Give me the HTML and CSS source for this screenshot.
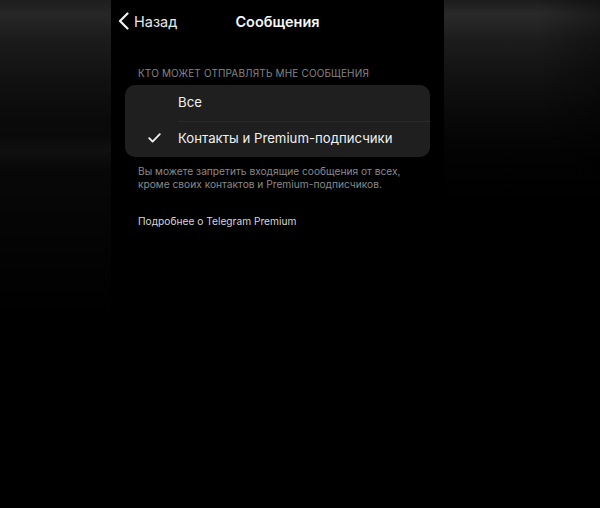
FILE: index.html
```html
<!DOCTYPE html>
<html lang="ru">
<head>
    <meta charset="UTF-8">
    <meta name="viewport" content="width=device-width, initial-scale=1.0">
    <title>Сообщения</title>
    <link rel="stylesheet" href="styles.css">
</head>
<body>

<div class="frame">
    <div class="side side-left"></div>

    <div class="screen">
        <div class="navbar">
            <a class="back" href="#">
                <svg width="11" height="18" viewBox="0 0 11 18">
                    <polyline points="9.5,1.5 2,9 9.5,16.5" fill="none" stroke="#f2f2f2" stroke-width="2.2" stroke-linecap="round" stroke-linejoin="round"/>
                </svg>
                <span>Назад</span>
            </a>
            <h1 class="title">Сообщения</h1>
        </div>

        <p class="section-title">Кто может отправлять мне сообщения</p>

        <ul class="options">
            <li class="option">
                <span class="check"></span>
                <span class="label">Все</span>
            </li>
            <li class="option selected">
                <span class="check">
                    <svg width="13" height="10" viewBox="0 0 13 10">
                        <polyline points="1.2,5.2 4.6,8.6 11.8,1.2" fill="none" stroke="#f2f2f2" stroke-width="1.8" stroke-linecap="round" stroke-linejoin="round"/>
                    </svg>
                </span>
                <span class="label">Контакты и Premium-подписчики</span>
            </li>
        </ul>

        <p class="footnote">Вы можете запретить входящие сообщения от всех, кроме своих контактов и Premium-подписчиков.</p>

        <a class="more" href="#">Подробнее о Telegram Premium</a>
    </div>

    <div class="side side-right"></div>
</div>

</body>
</html>
```

FILE: styles.css
```css
body {
    margin: 0;
    padding: 0;
    background-color: #000;
    color: #f0f0f0;
    font-family: Inter, "Noto Sans", sans-serif;
}

.frame {
    display: flex;
    width: 600px;
    height: 508px;
    overflow: hidden;
}

/* blurred edges around the phone screen */
.side {
    flex-shrink: 0;
    height: 100%;
}

.side-left {
    width: 111px;
    background:
        linear-gradient(to bottom, rgba(255,255,255,0) 135px, rgba(255,255,255,0.03) 150px, rgba(255,255,255,0) 170px),
        linear-gradient(to bottom, #1d1d1d 0, #272727 14px, #1b1b1b 40px, #111 80px, #0a0a0a 120px, #060606 200px, #000 320px);
}

.side-right {
    width: 156px;
    background:
        linear-gradient(to right, rgba(0,0,0,0) 0, rgba(0,0,0,0) 60%, rgba(0,0,0,0.35) 100%),
        linear-gradient(to bottom, #1c1c1c 0, #2a2a2a 14px, #1c1c1c 40px, #121212 75px, #0a0a0a 110px, #030303 150px, #000 200px);
}

.screen {
    width: 333px;
    flex-shrink: 0;
    background-color: #000;
    padding: 0 14px;
    box-sizing: border-box;
}

.navbar {
    position: relative;
    height: 42px;
    display: flex;
    align-items: center;
    justify-content: center;
}

.back {
    position: absolute;
    left: -7px;
    top: 12px;
    display: flex;
    align-items: center;
    gap: 5px;
    color: #e8e8e8;
    text-decoration: none;
    font-size: 14.5px;
}

.title {
    margin: 0;
    font-size: 14.5px;
    font-weight: 600;
    color: #f5f5f5;
}

.section-title {
    margin: 25px 0 6px 13px;
    font-size: 10px;
    line-height: 12px;
    text-transform: uppercase;
    letter-spacing: 0.15px;
    color: #858585;
}

.options {
    list-style: none;
    margin: 0;
    padding: 0;
    background-color: #1f1f1f;
    border-radius: 10px;
}

.option {
    display: flex;
    align-items: center;
    height: 36px;
    font-size: 13.2px;
    color: #f0f0f0;
}

.check {
    width: 53px;
    display: flex;
    justify-content: center;
    padding-left: 6px;
    box-sizing: border-box;
}

.label {
    flex: 1;
    height: 100%;
    display: flex;
    align-items: center;
    padding-bottom: 2px;
    box-sizing: border-box;
}

.option + .option .label {
    border-top: 1px solid #2a2a2a;
    padding-bottom: 3px;
}

.option + .option .check {
    padding-bottom: 2px;
}

.footnote {
    margin: 8px 0 0 13px;
    font-size: 10.2px;
    line-height: 13px;
    color: #8a8a8a;
    width: 268px;
}

.more {
    display: block;
    margin: 23px 0 0 13px;
    font-size: 10.2px;
    line-height: 14px;
    color: #d6d6d6;
    text-decoration: none;
}
```
